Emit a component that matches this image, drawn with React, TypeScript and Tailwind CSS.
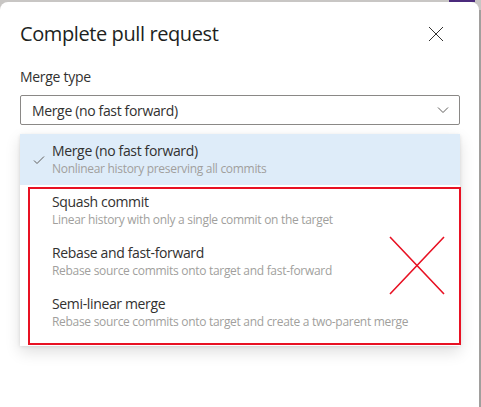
const OPTIONS = [
  { title: 'Merge (no fast forward)', desc: 'Nonlinear history preserving all commits', selected: true },
  { title: 'Squash commit', desc: 'Linear history with only a single commit on the target' },
  { title: 'Rebase and fast-forward', desc: 'Rebase source commits onto target and fast-forward' },
  { title: 'Semi-linear merge', desc: 'Rebase source commits onto target and create a two-parent merge' },
]

function CheckMark() {
  return (
    <svg width="12" height="12" viewBox="0 0 12 12" className="shrink-0">
      <path d="M1 6.5 L4 9.5 L11 2.5" fill="none" stroke="#605e5c" strokeWidth="1" />
    </svg>
  )
}

export default function App() {
  return (
    <div
      className="relative h-[407px] w-[481px] overflow-hidden bg-[#c8c6c4]"
      style={{ fontFamily: '"Segoe UI", "Open Sans", sans-serif' }}
    >
      {/* thing behind the dialog */}
      <div className="absolute right-[6px] top-0 h-[2px] w-[26px] bg-[#4b2a7c]" />

      <div className="ml-0 mr-[2px] mt-[2px] h-[405px] rounded-t-[8px] bg-white pl-5 pr-[19px] pt-[14px]">
        <div className="flex h-[36px] items-center justify-between">
          <h1 className="text-[20px] font-medium leading-[28px] tracking-[-0.4px] text-[#201f1e]">
            Complete pull request
          </h1>
          <svg width="16" height="16" viewBox="0 0 16 16" className="mr-[16px]">
            <path d="M1 1 L15 15 M15 1 L1 15" stroke="#323130" strokeWidth="1" />
          </svg>
        </div>

        <div className="mt-[15px] text-[14px] leading-[20px] tracking-[-0.3px] text-[#323130]">Merge type</div>

        <div className="mt-[8px] flex h-[30px] w-[440px] items-center justify-between rounded-[2px] border border-[#8a8886] pl-[11px] pr-[10px] text-[14px] tracking-[-0.35px] text-[#323130]">
          <span>Merge (no fast forward)</span>
          <svg width="12" height="12" viewBox="0 0 12 12">
            <path d="M1 3.5 L6 8.5 L11 3.5" fill="none" stroke="#605e5c" strokeWidth="1" />
          </svg>
        </div>

        <div className="relative mt-[9px] w-[440px] bg-white pb-[8px] shadow-[0_6.4px_14.4px_0_rgba(0,0,0,0.13),0_1.2px_3.6px_0_rgba(0,0,0,0.11)]">
          {OPTIONS.map((o) => (
            <div
              key={o.title}
              className={`flex h-[51px] items-center gap-[9px] pl-[13px] ${o.selected ? 'bg-[#deecf9]' : ''}`}
            >
              <div className="w-[10px]">{o.selected && <CheckMark />}</div>
              <div className="flex flex-col">
                <span className="text-[14px] leading-[18px] tracking-[-0.35px] text-[#323130]">{o.title}</span>
                <span className="text-[12px] leading-[18px] tracking-[-0.3px] text-[#a19f9d]">{o.desc}</span>
              </div>
            </div>
          ))}

          {/* annotation */}
          <div className="pointer-events-none absolute bottom-[1px] left-[8px] right-[-1px] top-[53px] border-2 border-[#e81123]" />
          <svg className="pointer-events-none absolute left-[369px] top-[102px]" width="56" height="59" viewBox="0 0 56 59">
            <path d="M1 1 L55 58 M55 1 L1 58" stroke="#e81123" strokeWidth="1.6" />
          </svg>
        </div>
      </div>
      <div className="absolute right-0 top-[10px] h-[397px] w-[2px] bg-[#a19f9d]" />
    </div>
  )
}
